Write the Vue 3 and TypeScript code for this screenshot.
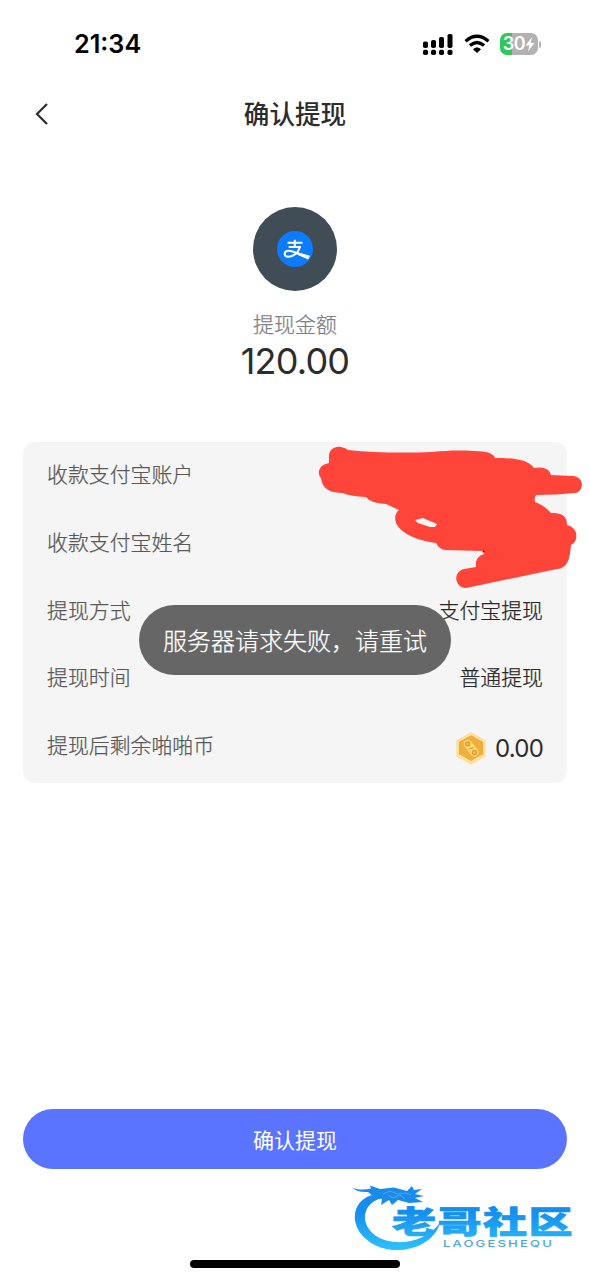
<script setup lang="ts">
interface DetailRow {
  label: string
  value: string
  coin?: boolean
}

const rows: DetailRow[] = [
  { label: '收款支付宝账户', value: '' },
  { label: '收款支付宝姓名', value: '' },
  { label: '提现方式', value: '支付宝提现' },
  { label: '提现时间', value: '普通提现' },
  { label: '提现后剩余啪啪币', value: '0.00', coin: true },
]
</script>

<template>
  <main class="screen">
    <header class="status">
      <span class="clock">21:34</span>
      <div class="indicators">
        <svg class="signal" viewBox="0 0 30 21" width="30" height="21">
          <rect x="0" y="7.5" width="5" height="6.5" rx="1.8" />
          <rect x="8" y="6" width="5" height="8" rx="1.8" />
          <rect x="16" y="3" width="5" height="11" rx="1.8" />
          <rect x="24.5" y="0" width="5" height="14" rx="1.8" />
          <rect x="0" y="15.8" width="5" height="5.2" rx="1.8" />
          <rect x="8" y="15.8" width="5" height="5.2" rx="1.8" />
          <rect x="16" y="15.8" width="5" height="5.2" rx="1.8" />
          <rect x="24.5" y="15.8" width="5" height="5.2" rx="1.8" />
        </svg>
        <svg class="wifi" viewBox="0 0 26 20" width="26" height="20">
          <path d="M1.6 7.2Q13-2.6 24.4 7.2" />
          <path d="M5.9 11.6Q13 5.5 20.1 11.6" />
          <path class="wifi-dot" d="M9.600 15.200Q13 12.400 16.400 15.200L13 18.600Z" />
        </svg>
        <div class="battery">
          <div class="cell">
            <span class="percent">30</span>
            <svg viewBox="0 0 10 15" width="10" height="15"><path d="M7.1 0L.5 8.5H4.4L2.9 14.5L9.6 6H5.7Z" /></svg>
          </div>
          <i class="tip"></i>
        </div>
      </div>
    </header>

    <nav class="nav">
      <svg class="back" viewBox="0 0 14 24" width="14" height="24"><path d="M12 2L2 12L12 22" /></svg>
      <h1>确认提现</h1>
    </nav>

    <section class="summary">
      <div class="avatar">
        <svg viewBox="0 0 36 36" width="36" height="36">
          <circle cx="18" cy="18" r="18" fill="#0d7bfd" />
          <g fill="none" stroke="#fff" stroke-width="2">
            <path d="M10.500 11.800H25.500M17.800 8.800V16M11.700 15.900H24" />
            <path d="M23 16C21 22 16 26 11 25.800C6.200 25.500 6.800 20 11.500 19.800C16 19.600 22 23.500 31 26" />
          </g>
          <path d="M21.500 21.500L33 24.800L31.300 28.500L21 24Z" fill="#fff" />
        </svg>
      </div>
      <p class="caption">提现金额</p>
      <p class="amount">120.00</p>
    </section>

    <section class="card">
      <div v-for="row in rows" :key="row.label" class="row">
        <span class="label">{{ row.label }}</span>
        <span v-if="row.coin" class="balance">
          <svg viewBox="0 0 30 33" width="30" height="33">
            <path d="M15 .7L29.200 8.700V24.300L15 32.300L.8 24.300V8.700Z" fill="#fbe0a0" stroke="#fbe0a0" stroke-linejoin="round" />
            <path d="M15 3.800L26.500 10.200V22.800L15 29.200L3.500 22.800V10.200Z" fill="#f0ae3c" stroke="#eda93a" />
            <path d="M3.600 23L15 29.600L26.500 23" fill="none" stroke="#fff0c0" />
            <path d="M11.800 12L18.500 20.500" stroke="#ffdc7c" stroke-width="8" stroke-linecap="round" />
            <g fill="#f3bd50" stroke="#db9a32" stroke-width="1.200">
              <circle cx="11.800" cy="12" r="2.200" /><circle cx="18.500" cy="20.500" r="2.200" />
              <path d="M12.500 17L17.500 15.600" />
            </g>
          </svg>
          {{ row.value }}
        </span>
        <span v-else class="value">{{ row.value }}</span>
      </div>
      <svg class="scribble" viewBox="0 0 290 170" width="290" height="170">
        <path fill-rule="evenodd" d="M29 29C28 20 34 16 41 17Q46 18 48 20C75 23 105 23 132 22C150 20 169 20 186 22C191 23 195 26 195 28C212 28 228 29 234 38C243 36 250 39 251 45L273 46C285 47 284 62 275 63C263 64 249 65 236 65Q234 67 235 72Q244 75 251 83C261 83 267 85 267 95C276 97 279 106 274 113L271 115C270 126 269 138 257 139L166 158C155 158 152 142 164 139L176 137C175 130 178 126 184 124L182 121L145 120Q139 119 136 113C119 111 101 104 96 93C94 87 96 82 99 80L86 74Q70 73 66 67Q49 66 43 63C29 63 22 58 21 48C17 44 18 35 29 33ZM115 90L123 88L137 94L135 97L130 97L118 93Z" />
        <path d="M183 120L185 122L183 122Z" fill="#222" />
      </svg>
    </section>

    <button class="confirm" type="button">确认提现</button>

    <div class="toast">服务器请求失败，请重试</div>

    <svg class="watermark" viewBox="0 0 250 80" width="250" height="80">
      <defs>
        <linearGradient id="wm" x1="0" y1="10" x2="0" y2="78" gradientUnits="userSpaceOnUse">
          <stop offset="0" stop-color="#1c8ae8" />
          <stop offset=".4" stop-color="#168eed" />
          <stop offset="1" stop-color="#2fc6fb" />
        </linearGradient>
      </defs>
      <g fill="url(#wm)">
        <path d="M36 19C12 23 8 49 26 64C48 84 92 76 100 48C86 67 55 73 36 61C19 49 22 28 42 23Z" />
        <path d="M12 12.500C18 15 24 15 31 13.500L30 10.500L40 14L54 12.500L67 16L72 11L74 15L82 14L75 19L84 21L75 23L83 27L69 28L58 25L52 30L49 25L41 30L42 24L34 22L28 17C21 17.500 16 16 12 12.500Z" />
        <text class="wm-main" x="52" y="58" textLength="182" lengthAdjust="spacingAndGlyphs">老哥社区</text>
      </g>
      <text class="wm-sub" x="103" y="71.500" textLength="111" lengthAdjust="spacingAndGlyphs">LAOGESHEQU</text>
      <path d="M43 19L50 16L57 19L66 18L71 20M48 20L53 23L60 20L65 24" fill="none" stroke="#5aaef0" stroke-width=".8" />
    </svg>
    <i class="home"></i>
  </main>
</template>

<style>
body {
  margin: 0;
  background: #fff;
}
</style>

<style scoped>
.screen {
  position: relative;
  box-sizing: border-box;
  width: 590px;
  height: 1280px;
  overflow: hidden;
  display: flex;
  flex-direction: column;
  background: #fff;
  color: #2c2c2c;
  font-family: Inter, "Noto Sans CJK SC", sans-serif;
}
.status {
  height: 88px;
  padding: 0 49px 0 74px;
  box-sizing: border-box;
  display: flex;
  align-items: center;
  justify-content: space-between;
  color: #000;
}
.clock {
  font-size: 25.2px;
  font-weight: 600;
}
.indicators {
  display: flex;
  align-items: center;
}
.signal {
  margin-right: 11px;
}
.wifi {
  margin-right: 10px;
  fill: none;
  stroke: #000;
  stroke-width: 3.3;
}
.wifi-dot {
  fill: #000;
  stroke-width: 1;
  stroke-linejoin: round;
}
.battery {
  display: flex;
  align-items: center;
  gap: 1px;
}
.cell {
  width: 38px;
  height: 22px;
  border-radius: 7px;
  display: flex;
  align-items: center;
  justify-content: center;
  background: linear-gradient(90deg, #35c65b 32%, #b2b2b2 32%);
  color: #fff;
}
.cell svg {
  fill: #fff;
}
.percent {
  font-size: 18px;
  line-height: 22px;
  font-weight: 600;
  letter-spacing: -.3px;
}
.tip {
  width: 2px;
  height: 7px;
  border-radius: 0 2px 2px 0;
  background: #b2b2b2;
}
.nav {
  height: 52px;
  padding: 0 35px;
  display: grid;
  grid-template-columns: 14px 1fr 14px;
  align-items: center;
}
.back {
  fill: none;
  stroke: #2c2c2c;
  stroke-width: 2.2;
}
h1 {
  margin: 2px 0 0;
  text-align: center;
  font-size: 25.6px;
  line-height: 36px;
  font-weight: 500;
}
.summary {
  margin-top: 67px;
  height: 235px;
  display: flex;
  flex-direction: column;
  align-items: center;
}
.avatar {
  width: 84px;
  height: 84px;
  flex: none;
  border-radius: 50%;
  background: #414d56;
  display: grid;
  place-items: center;
}
.caption {
  margin: 19px 0 0;
  font-size: 21px;
  line-height: 30px;
  font-weight: 300;
  color: #7e7e86;
  -webkit-text-stroke: .25px currentColor;
}
.amount {
  margin: -1px 0 0;
  font-size: 36px;
  line-height: 44px;
  letter-spacing: -.8px;
}
.card {
  position: relative;
  margin: 0 23px;
  height: 340.5px;
  box-sizing: border-box;
  padding: 0 24px;
  border-radius: 12px;
  background: #f5f5f5;
  display: grid;
  grid-template-rows: repeat(5, 67.7px);
}
.row {
  display: flex;
  align-items: center;
  justify-content: space-between;
  font-size: 20.9px;
  line-height: 30px;
  font-weight: 300;
}
.label {
  color: #585858;
  margin-top: -1px;
  -webkit-text-stroke: .25px currentColor;
}
.value {
  color: #262626;
  margin-top: -1px;
  -webkit-text-stroke: .25px currentColor;
}
.balance {
  display: flex;
  align-items: center;
  gap: 9px;
  font-size: 24px;
  font-weight: 400;
  letter-spacing: -.8px;
  padding-top: 4px;
}
.scribble {
  position: absolute;
  left: 277px;
  top: -12px;
  fill: #ff453a;
}
.confirm {
  margin: 326.5px 23px 0;
  height: 60px;
  flex: none;
  padding: 0;
  border: 0;
  border-radius: 30px;
  background: #5b74ff;
  color: #fff;
  font: inherit;
  font-size: 21px;
}
.toast {
  position: absolute;
  left: 139px;
  top: 605px;
  width: 312px;
  height: 70px;
  border-radius: 35px;
  background: #666;
  color: #fff;
  font-family: "Noto Sans CJK SC", sans-serif;
  font-size: 24px;
  font-weight: 300;
  line-height: 70px;
  text-align: center;
  white-space: nowrap;
  -webkit-text-stroke: .25px currentColor;
}
.watermark {
  position: absolute;
  left: 340px;
  top: 1175px;
}
.wm-main {
  font-family: "Noto Sans CJK SC", sans-serif;
  font-size: 31px;
  font-weight: 900;
  letter-spacing: 1px;
  stroke: url(#wm);
  stroke-width: .7;
}
.wm-sub {
  font-family: Inter, sans-serif;
  font-size: 9.5px;
  font-weight: 500;
  letter-spacing: 1.6px;
  fill: #48a7dd;
}
.home {
  position: absolute;
  left: 190px;
  top: 1260px;
  width: 210px;
  height: 8px;
  border-radius: 4px;
  background: #000;
}
</style>
